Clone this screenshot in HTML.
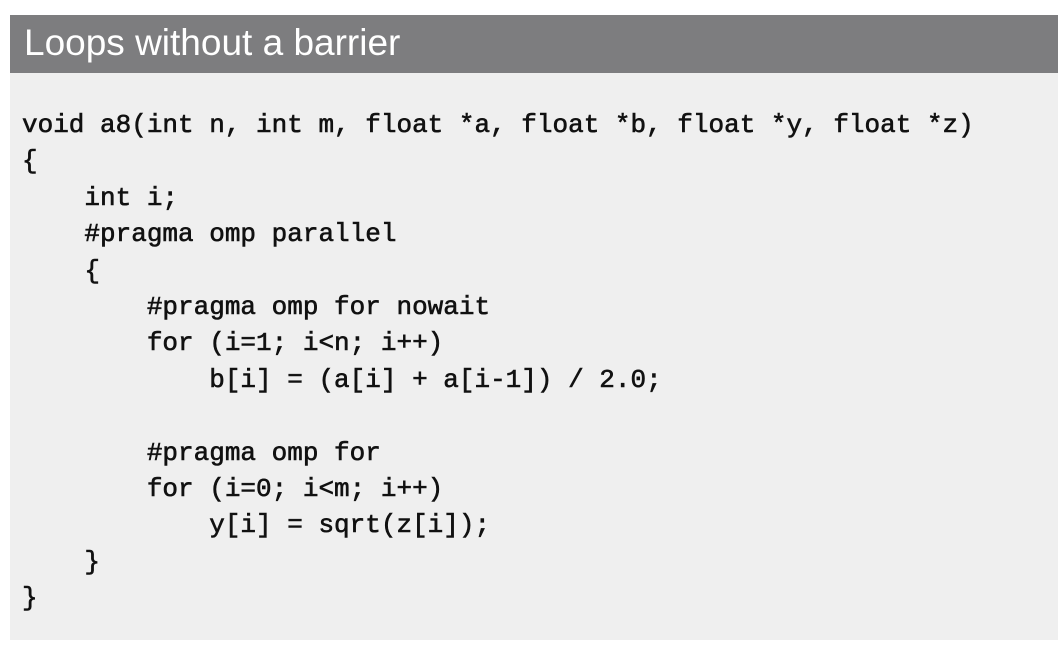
<!DOCTYPE html>
<html><head><meta charset="utf-8"><style>
html,body{margin:0;padding:0;background:#fff;width:1058px;height:660px;overflow:hidden}
.hdr{position:absolute;left:10px;top:15px;width:1048px;height:58px;background:#7d7d7f}
.hdr span{position:absolute;left:14px;top:7px;font:37px "Liberation Sans",sans-serif;color:#fff}
.body{position:absolute;left:10px;top:73px;width:1048px;height:567px;background:#efefef}
pre{position:absolute;left:22px;top:107px;margin:0;font:26px/36.4px "Liberation Mono",monospace;color:#111;-webkit-text-stroke:0.6px #111}
</style></head><body>
<div class="hdr"><span>Loops without a barrier</span></div>
<div class="body"></div>
<pre>void a8(int n, int m, float *a, float *b, float *y, float *z)
{
    int i;
    #pragma omp parallel
    {
        #pragma omp for nowait
        for (i=1; i&lt;n; i++)
            b[i] = (a[i] + a[i-1]) / 2.0;

        #pragma omp for
        for (i=0; i&lt;m; i++)
            y[i] = sqrt(z[i]);
    }
}</pre>
</body></html>
